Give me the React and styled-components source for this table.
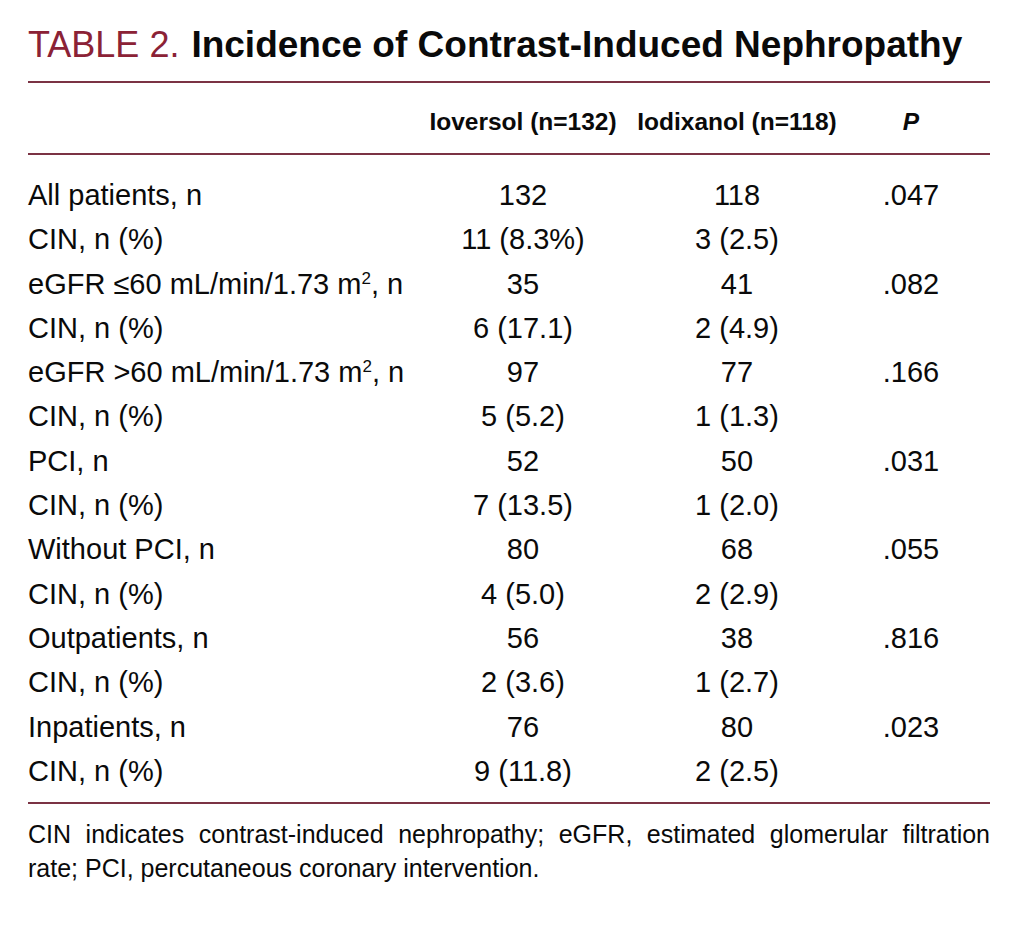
import React from "react";
import styled, { createGlobalStyle } from "styled-components";

const Global = createGlobalStyle`
  html, body { margin: 0; padding: 0; background: #ffffff; }
  body { font-family: "Liberation Sans", Arial, sans-serif; color: #111; }
`;

const Page = styled.div`
  width: 962px;
  padding: 24px 30px 0 28px;
  background: #fff;
`;

const Title = styled.h1`
  margin: 0;
  font-family: "Liberation Sans", Arial, sans-serif;
  font-size: 37px;
  line-height: 42px;
  font-weight: 700;
  color: #0a0a0a;
  white-space: nowrap;
`;

const TitleLabel = styled.span`
  font-weight: 400;
  font-size: 36px;
  color: #8b2236;
  margin-right: 12px;
`;

const Rule = styled.div`
  height: 2px;
  background: #7b3344;
  margin-top: ${(p) => p.$top || 0}px;
`;

const Grid = styled.div`
  display: grid;
  grid-template-columns: 392px 206px 222px 126px 1fr;
  font-family: "Liberation Sans", Arial, sans-serif;
  color: #0a0a0a;
`;

const HeadRow = styled(Grid)`
  font-size: 24.5px;
  font-weight: 700;
  line-height: 44px;
  padding: 17px 0 9px;
`;

const Body = styled.div`
  padding: 18px 0 9px;
`;

const Row = styled(Grid)`
  font-size: 29px;
  line-height: 44.3px;
`;

const Cell = styled.div`
  text-align: ${(p) => (p.$left ? "left" : "center")};
  white-space: nowrap;
  font-style: ${(p) => (p.$italic ? "italic" : "normal")};
`;

const Sup = styled.sup`
  font-size: 17px;
  line-height: 0;
  vertical-align: 0;
  position: relative;
  top: -10px;
`;

const Note = styled.p`
  margin: 13px 0 0;
  font-family: "Liberation Sans", Arial, sans-serif;
  font-size: 25px;
  line-height: 34px;
  text-align: justify;
  color: #0a0a0a;
`;

const m2 = (
  <>
    m<Sup>2</Sup>
  </>
);

const rows = [
  ["All patients, n", "132", "118", ".047"],
  ["CIN, n (%)", "11 (8.3%)", "3 (2.5)", ""],
  [<>eGFR ≤60 mL/min/1.73 {m2}, n</>, "35", "41", ".082"],
  ["CIN, n (%)", "6 (17.1)", "2 (4.9)", ""],
  [<>eGFR &gt;60 mL/min/1.73 {m2}, n</>, "97", "77", ".166"],
  ["CIN, n (%)", "5 (5.2)", "1 (1.3)", ""],
  ["PCI, n", "52", "50", ".031"],
  ["CIN, n (%)", "7 (13.5)", "1 (2.0)", ""],
  ["Without PCI, n", "80", "68", ".055"],
  ["CIN, n (%)", "4 (5.0)", "2 (2.9)", ""],
  ["Outpatients, n", "56", "38", ".816"],
  ["CIN, n (%)", "2 (3.6)", "1 (2.7)", ""],
  ["Inpatients, n", "76", "80", ".023"],
  ["CIN, n (%)", "9 (11.8)", "2 (2.5)", ""],
];

export default function App() {
  return (
    <Page>
      <Global />
      <Title>
        <TitleLabel>TABLE 2.</TitleLabel>Incidence of Contrast-Induced Nephropathy
      </Title>
      <Rule $top={15} />
      <HeadRow>
        <Cell $left />
        <Cell>Ioversol (n=132)</Cell>
        <Cell>Iodixanol (n=118)</Cell>
        <Cell $italic>P</Cell>
        <Cell />
      </HeadRow>
      <Rule />
      <Body>
        {rows.map((r, i) => (
          <Row key={i}>
            <Cell $left>{r[0]}</Cell>
            <Cell>{r[1]}</Cell>
            <Cell>{r[2]}</Cell>
            <Cell>{r[3]}</Cell>
            <Cell />
          </Row>
        ))}
      </Body>
      <Rule />
      <Note>
        CIN indicates contrast-induced nephropathy; eGFR, estimated glomerular filtration
        rate; PCI, percutaneous coronary intervention.
      </Note>
    </Page>
  );
}
